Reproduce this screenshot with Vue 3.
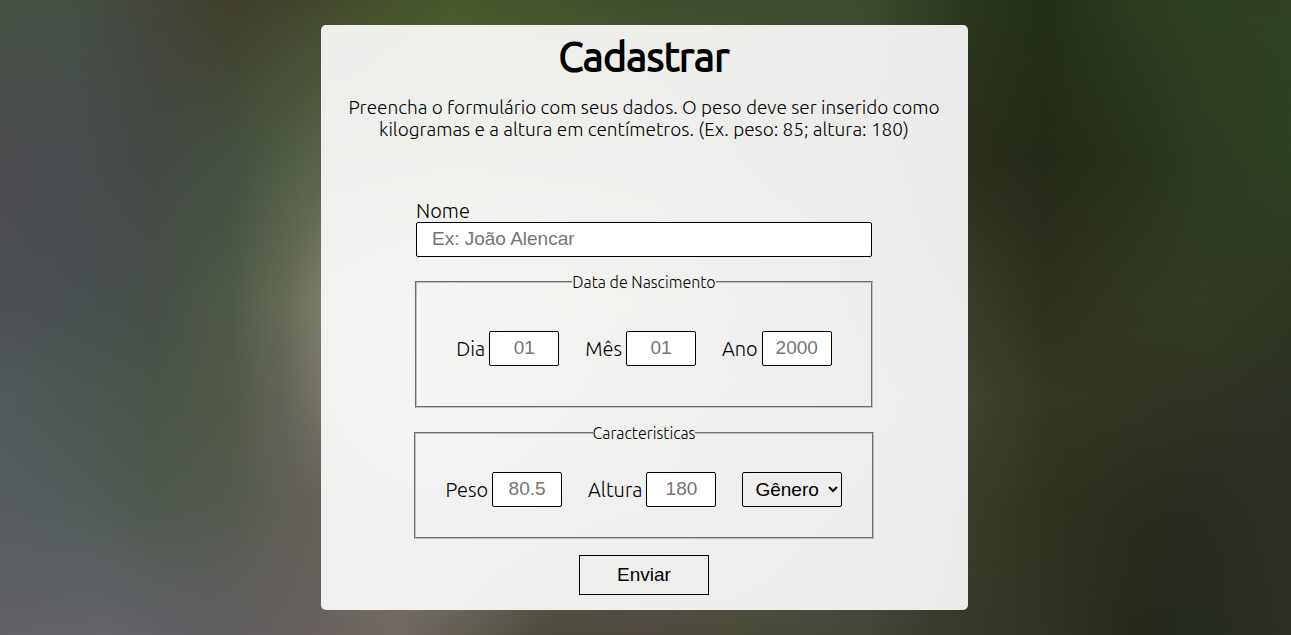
<script setup>
import { ref } from 'vue'

const name = ref('')
const gender = ref('')
const birth = ref([
  { id: 'dia', label: 'Dia', hint: '01', value: '' },
  { id: 'mes', label: 'Mês', hint: '01', value: '' },
  { id: 'ano', label: 'Ano', hint: '2000', value: '' },
])
const traits = ref([
  { id: 'peso', label: 'Peso', hint: '80.5', value: '' },
  { id: 'altura', label: 'Altura', hint: '180', value: '' },
])
</script>

<template>
  <main class="page">
    <div class="backdrop" aria-hidden="true">
      <div class="band band-1"></div>
      <div class="band band-2"></div>
      <div class="band band-3"></div>
      <div class="band band-4"></div>
      <div class="band band-5"></div>
      <div class="band band-6"></div>
    </div>
    <section class="card">
      <h1>Cadastrar</h1>
      <p class="intro">Preencha o formulário com seus dados. O peso deve ser inserido como kilogramas e a altura em centímetros. (Ex. peso: 85; altura: 180)</p>
      <form @submit.prevent>
        <div class="name">
          <label for="nome">Nome</label>
          <input id="nome" v-model="name" type="text" placeholder="Ex: João Alencar">
        </div>
        <fieldset class="birth">
          <legend>Data de Nascimento</legend>
          <div class="row">
            <div v-for="f in birth" :key="f.id" class="field">
              <label :for="f.id">{{ f.label }}</label>
              <input :id="f.id" v-model="f.value" class="short" type="text" :placeholder="f.hint">
            </div>
          </div>
        </fieldset>
        <fieldset class="traits">
          <legend>Caracteristicas</legend>
          <div class="row">
            <div v-for="f in traits" :key="f.id" class="field">
              <label :for="f.id">{{ f.label }}</label>
              <input :id="f.id" v-model="f.value" class="short" type="text" :placeholder="f.hint">
            </div>
            <select v-model="gender" aria-label="Gênero">
              <option value="">Gênero</option>
              <option value="f">Feminino</option>
              <option value="m">Masculino</option>
            </select>
          </div>
        </fieldset>
        <button type="submit">Enviar</button>
      </form>
    </section>
  </main>
</template>

<style>
body {
  margin: 0;
}
</style>

<style scoped>
.page {
  position: relative;
  box-sizing: border-box;
  min-height: 100vh;
  padding: 25px 0;
  display: grid;
  grid-template-columns: 321fr 647fr 323fr;
  align-items: start;
  font-family: Ubuntu, "Open Sans", "Noto Sans", sans-serif;
  font-weight: 300;
  color: #000;
}

/* Out-of-focus foliage: horizontal colour bands that fade into each other. */
.backdrop,
.band {
  position: absolute;
  inset: 0;
}

.backdrop {
  overflow: hidden;
}

.band-1 {
  background: linear-gradient(90deg, #455043 0%, #444f44 6%, #44453c 12%, #40402c 18%, #42492a 25%, #495a2b 35%, #3f4d2b 50%, #3e4c2b 67%, #2b371c 75%, #243018 81%, #2d3c1d 88%, #2f401e 93%, #30401f 100%);
}

.band-2 {
  background: linear-gradient(90deg, #4d4d50 0%, #484c4e 6%, #434943 12%, #445042 18%, #596447 25%, #606a45 35%, #5a6648 50%, #40453c 67%, #2b2e1d 75%, #252b1a 81%, #28321c 88%, #2d3b1f 93%, #2e401f 100%);
  mask-image: linear-gradient(transparent 0%, #000 25%);
}

.band-3 {
  background: linear-gradient(90deg, #4e5153 0%, #4a5152 6%, #485049 12%, #505a49 18%, #666b58 22%, #7e7e6c 25%, #929282 35%, #74805c 50%, #4a4a48 67%, #3b3b2b 75%, #303020 81%, #31381f 88%, #313b20 93%, #2f3622 100%);
  mask-image: linear-gradient(transparent 25%, #000 48%);
}

.band-4 {
  background: linear-gradient(90deg, #525a5c 0%, #4c5852 6%, #4b564a 12%, #525948 18%, #64655a 22%, #767468 25%, #a0a098 31%, #88887e 38%, #696960 50%, #555552 67%, #43442f 75%, #353624 81%, #323524 88%, #303325 93%, #2d3126 100%);
  mask-image: linear-gradient(transparent 48%, #000 63%);
}

.band-5 {
  background: linear-gradient(90deg, #565c60 0%, #525c5a 6%, #4f594e 12%, #555a4f 18%, #66625b 25%, #757575 35%, #64645c 50%, #4c4c48 67%, #3a3c2a 75%, #303320 81%, #2c2d20 88%, #2b2c22 93%, #302f26 100%);
  mask-image: linear-gradient(transparent 63%, #000 79%);
}

.band-6 {
  background: linear-gradient(90deg, #636268 0%, #65656c 8%, #605f62 16%, #69625e 25%, #726a64 31%, #4c4a3b 43%, #4f4840 50%, #4a4a3a 57%, #45453a 67%, #363829 75%, #303325 81%, #262a1d 88%, #262b20 93%, #2d2f24 100%);
  mask-image: linear-gradient(transparent 79%, #000 100%);
}

.card {
  position: relative;
  grid-column: 2;
  box-sizing: border-box;
  padding: 8px 25px 15px 24px;
  border-radius: 5px;
  background: rgba(255, 255, 255, 0.9);
  text-align: center;
}

h1 {
  margin: 0;
  font-size: 40px;
  font-weight: 300;
  line-height: 48px;
  -webkit-text-stroke: 2px #000;
}

.intro {
  margin: 15px 0 59px;
  font-size: 19px;
  line-height: 22px;
}

form {
  display: flex;
  flex-direction: column;
  align-items: center;
}

.name {
  display: flex;
  flex-direction: column;
  width: 456px;
  max-width: 100%;
  text-align: left;
}

label {
  font-size: 20px;
  line-height: 23px;
}

input,
select {
  box-sizing: border-box;
  height: 35px;
  border: 1px solid #000;
  border-radius: 2px;
  font-family: "Liberation Sans", Arial, sans-serif;
  font-size: 19px;
}

input {
  padding: 0 15px 2px;
  background: #fff;
}

input::placeholder {
  color: #757575;
}

.short {
  width: 70px;
  padding: 0 0 2px;
  text-align: center;
}

fieldset {
  box-sizing: border-box;
  min-width: 0;
  max-width: 100%;
  margin: 0;
  padding: 0;
  border: 2px groove #c0c0c0;
}

.birth {
  width: 458px;
  margin-top: 16px;
}

.traits {
  width: 460px;
  margin-top: 16px;
}

legend {
  margin: 0 auto;
  padding: 0;
  font-size: 16px;
  line-height: 18px;
}

.row {
  display: flex;
  justify-content: center;
  align-items: center;
  gap: 26px;
}

.birth .row {
  padding: 40px 0;
}

.traits .row {
  padding: 30px 0;
}

.field {
  display: flex;
  align-items: center;
  gap: 4px;
}

select {
  width: 100px;
  padding: 0 0 0 8px;
  background: transparent;
  color: #000;
}

button {
  width: 130px;
  height: 40px;
  margin-top: 16px;
  padding: 0;
  border: 1px solid #000;
  background: transparent;
  color: #000;
  font-family: "Liberation Sans", Arial, sans-serif;
  font-size: 19px;
}
</style>
